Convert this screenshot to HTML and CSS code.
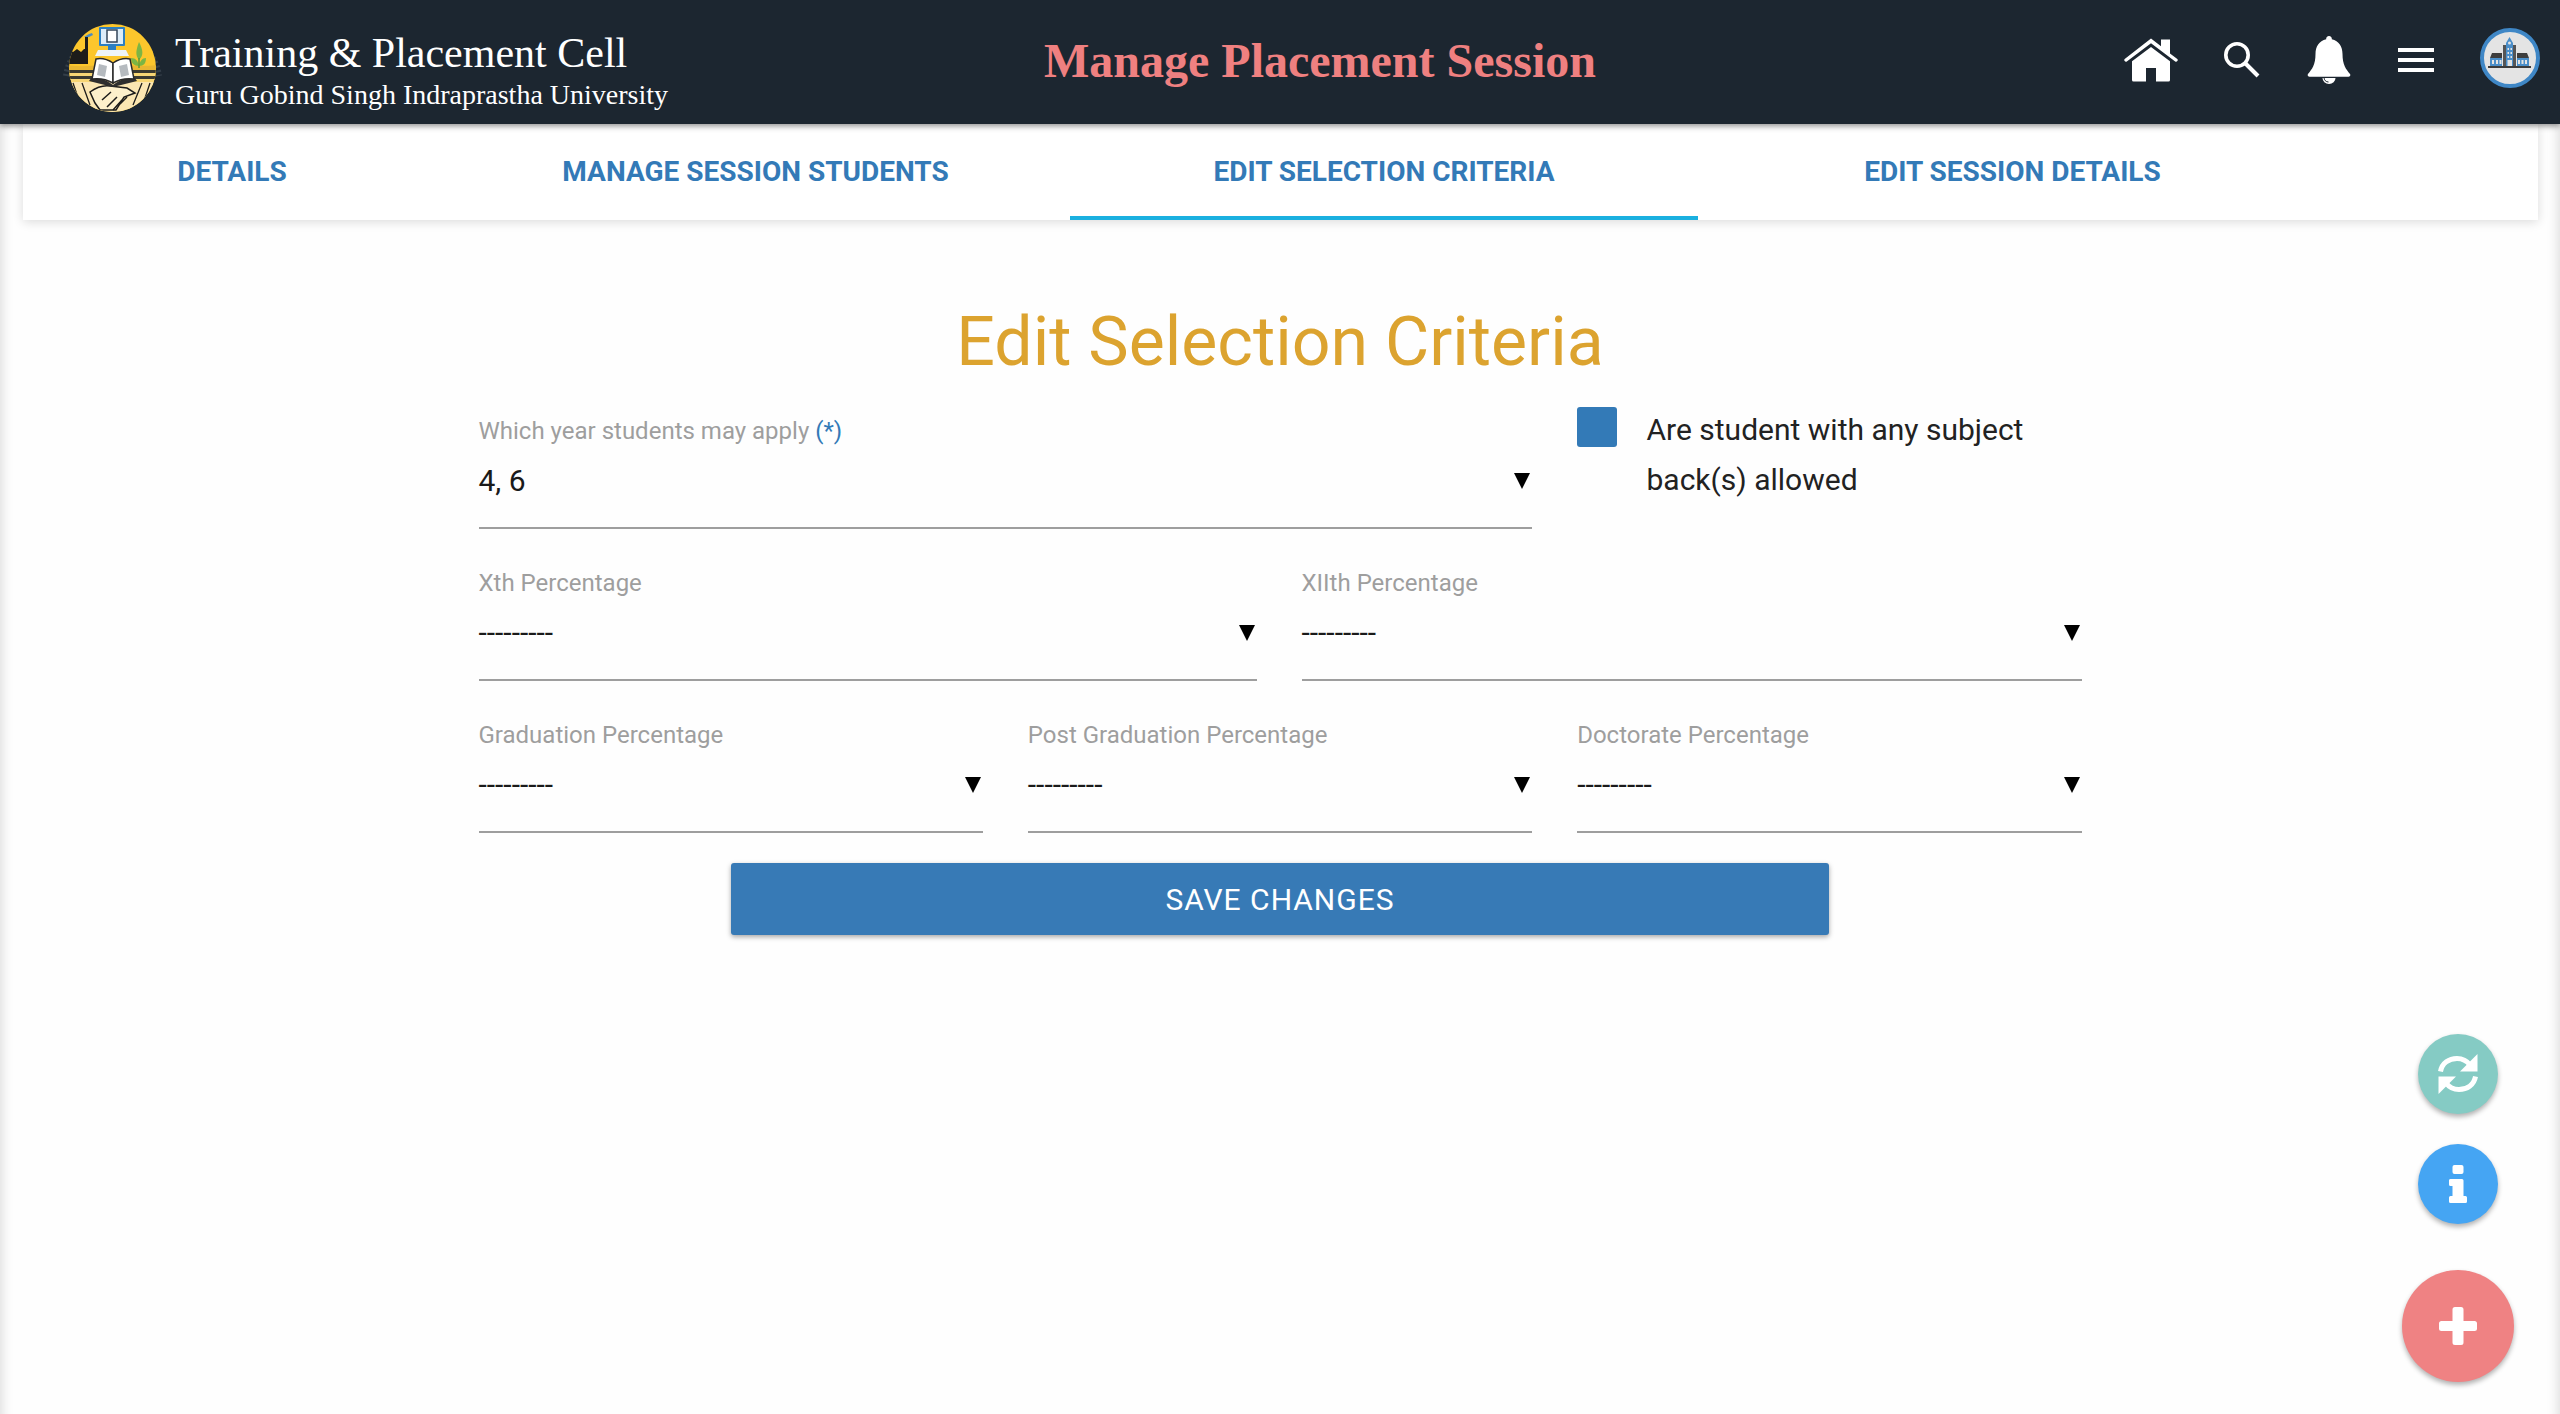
FILE: index.html
```html
<!DOCTYPE html>
<html lang="en">
<head>
    <meta charset="UTF-8">
    <title>Manage Placement Session</title>
    <link rel="stylesheet" href="styles.css">
</head>
<body>
<header class="topbar">
    <div class="brand">
        <svg class="logo" viewBox="0 0 110 100">
            <defs>
                <clipPath id="logoClip"><ellipse cx="52.500" cy="54" rx="43.500" ry="44"/></clipPath>
            </defs>
            <path d="M6 62A47 49 0 0 1 99 62" fill="none" stroke="#333e48" stroke-width="6" stroke-dasharray="2 2.500"/>
            <g clip-path="url(#logoClip)">
                <rect x="0" y="0" width="110" height="100" fill="#fcc62c"/>
                <path d="M0 50c15 3 30 3 40 0v18H0zM66 50c12 3 22 2 44 0v18H66z" fill="#e9b631"/>
                <path d="M0 56h110v3H0zM0 62h110v3H0z" fill="#3b3a30"/>
                <path d="M0 59h110v3H0zM0 65h110v3H0z" fill="#f7d675"/>
                <path d="M4 38l6-2 3 2 4-3 4 3 3-3h4v15H4z" fill="#1d1c1a"/>
                <rect x="25" y="23" width="3" height="17" fill="#1d1c1a"/>
                <path d="M24 23l5-3 3-1 1 2-4 2z" fill="#4b8bc0"/>
                <path d="M79 46c-4-5-3-10 0-18 4 8 5 13 0 18z" fill="#7cb544"/>
                <path d="M79 52c-5 0-8-3-8-8 5 0 7 3 8 8zM79 52c5 0 7-3 7-8-4 0-6 3-7 8z" fill="#7cb544"/>
                <path d="M79 44v10" stroke="#5f9a35" stroke-width="1.500"/>
                <path d="M0 68h110v32H0z" fill="#fbe6b2"/>
                <path d="M13 69l9 26M22 69l8 22M82 69l-9 22M90 69l-8 24" stroke="#1d1c1a" stroke-width="1.300" fill="none"/>
                <path d="M30 78c7-5 13-7 20-6l17 2 8 5-11 4-8 13H40l-5-7z" fill="#fdf0cb" stroke="#1d1c1a" stroke-width="1.500"/>
                <path d="M42 86l9-8M47 93l10-10M53 96l9-10M60 90l7-7" stroke="#1d1c1a" stroke-width="1.500"/>
                <path d="M20 100l12-5 4 5zM84 100l-12-5-4 5z" fill="#1d1c1a"/>
            </g>
            <rect x="39" y="13" width="26" height="19" rx="1" fill="#2c7fc1"/>
            <rect x="41" y="15" width="22" height="15" fill="#dcecf8"/>
            <rect x="47" y="16" width="10" height="12" fill="#fff" stroke="#33465a" stroke-width="1.500"/>
            <path d="M48 32h8v4h-8z" fill="#2c7fc1"/>
            <path d="M38 36h28l3 6H35z" fill="#eef4f8"/>
            <path d="M53 71C45 65 38 63 31 64l-2 3 24 6 24-6-2-3c-7-1-14 1-22 7z" fill="#2e2e2e"/>
            <path d="M53 49c-6-4-12-5-17-4l-4 20c7-1 14 0 21 4z" fill="#fff" stroke="#2a2a2a" stroke-width="1.500"/>
            <path d="M53 49c6-4 12-5 17-4l4 20c-7-1-14 0-21 4z" fill="#fff" stroke="#2a2a2a" stroke-width="1.500"/>
            <path d="M39 50l8 2-2 11-8-2zM59 52l8-2 2 11-8 2z" fill="#46535e" opacity=".4"/>
        </svg>
        <div class="brand-text">
            <div class="brand-title">Training &amp; Placement Cell</div>
            <div class="brand-sub">Guru Gobind Singh Indraprastha University</div>
        </div>
    </div>
    <h1 class="page-name">Manage Placement Session</h1>
    <nav class="top-icons">
        <svg class="ico-home" viewBox="0 0 54 44">
            <path fill="#fff" d="M27 .6 37 8.200V1.500h9V15.500l7.300 5.400a1.700 1.700 0 0 1-2.100 2.600L27 5.300 2.800 23.500A1.700 1.700 0 0 1 .7 20.900z"/>
            <path fill="#fff" d="M27 9 8 23.200V42a1.500 1.500 0 0 0 1.500 1.500H22V30h10v13.500h12.500A1.500 1.500 0 0 0 46 42V23.200z"/>
        </svg>
        <svg class="ico-search" viewBox="0 0 36 36">
            <circle cx="13" cy="13" r="11.200" fill="none" stroke="#fff" stroke-width="3.600"/>
            <path d="M21.500 21.500l12.500 12.500" stroke="#fff" stroke-width="4" fill="none"/>
        </svg>
        <svg class="ico-bell" viewBox="0 0 44 48">
            <path fill="#fff" d="M22 0a2.800 2.800 0 0 1 2.800 3.200C32 5 35.500 10.500 35.500 18c0 11 3.500 15 7.500 20a1.800 1.800 0 0 1-1.500 2.800H2.500A1.800 1.800 0 0 1 1 38c4-5 7.500-9 7.500-20C8.500 10.500 12 5 19.200 3.200A2.800 2.800 0 0 1 22 0z"/>
            <path fill="#fff" d="M15.500 42h13a6.500 6 0 0 1-13 0z"/>
            <path fill="none" stroke="#1c2630" stroke-width="1" d="M17 41.500c0 2.500 2 4.500 4.500 4.500"/>
        </svg>
        <div class="ico-menu"><i></i><i></i><i></i></div>
        <div class="avatar">
            <svg viewBox="4 4 52 52">
                <path d="M8 38h43v2H8z" fill="#3c3c3c"/>
                <path d="M10 30h12v8H10zM37 30h12v8H37z" fill="#4a8ec9"/>
                <path d="M10 30l2-5h10v5zM49 30l-2-5H37v5z" fill="#3d3d3d"/>
                <path d="M23 17h3v21h-3zM33 17h3v21h-3z" fill="#555"/>
                <path d="M26 17h7v21h-7z" fill="#4a8ec9"/>
                <path d="M29.500 9l3.500 6v3h-7v-3z" fill="#4a8ec9"/>
                <circle cx="29.500" cy="15" r="1.500" fill="#e4e4e4"/>
                <path d="M27.500 20h1.500v2h-1.500zM30.500 20h1.500v2h-1.500zM27.500 24h1.500v2h-1.500zM30.500 24h1.500v2h-1.500zM27.500 28h1.500v2h-1.500zM30.500 28h1.500v2h-1.500zM27.500 32h4.500v6h-4.500zM12 32h2v4h-2zM16 32h2v4h-2zM19.500 32h2v4h-2zM38 32h2v4h-2zM41.500 32h2v4h-2zM45 32h2v4h-2z" fill="#e4e4e4"/>
            </svg>
        </div>
    </nav>
</header>

<div class="tabs">
    <a class="tab">DETAILS</a>
    <a class="tab">MANAGE SESSION STUDENTS</a>
    <a class="tab active">EDIT SELECTION CRITERIA</a>
    <a class="tab">EDIT SESSION DETAILS</a>
</div>

<main class="content">
    <h2 class="heading">Edit Selection Criteria</h2>
    <form class="criteria">
        <div class="row row-first">
            <div class="field">
                <label>Which year students may apply <span class="req">(*)</span></label>
                <div class="select"><span>4, 6</span><i class="arrow"></i></div>
            </div>
            <div class="check-field">
                <span class="box"></span>
                <span class="check-text">Are student with any subject back(s) allowed</span>
            </div>
        </div>
        <div class="row row-two">
            <div class="field">
                <label>Xth Percentage</label>
                <div class="select"><span>---------</span><i class="arrow"></i></div>
            </div>
            <div class="field">
                <label>XIIth Percentage</label>
                <div class="select"><span>---------</span><i class="arrow"></i></div>
            </div>
        </div>
        <div class="row row-three">
            <div class="field">
                <label>Graduation Percentage</label>
                <div class="select"><span>---------</span><i class="arrow"></i></div>
            </div>
            <div class="field">
                <label>Post Graduation Percentage</label>
                <div class="select"><span>---------</span><i class="arrow"></i></div>
            </div>
            <div class="field">
                <label>Doctorate Percentage</label>
                <div class="select"><span>---------</span><i class="arrow"></i></div>
            </div>
        </div>
        <button class="save" type="button">SAVE CHANGES</button>
    </form>
</main>

<div class="fabs">
    <div class="fab fab-refresh">
        <svg viewBox="0 0 42 42" width="42" height="42">
            <path fill="none" stroke="#fff" stroke-width="5" d="M3.500 18.500C5 10 12 5.500 20 5.500c5.500 0 10 2.500 13 6.500"/>
            <path fill="#fff" d="M40.500 1v17.500H23z"/>
            <path fill="none" stroke="#fff" stroke-width="5" d="M38.500 23.500C37 32 30 36.500 22 36.500c-5.500 0-10-2.500-13-6.500"/>
            <path fill="#fff" d="M1.500 41V23.500H19z"/>
        </svg>
    </div>
    <div class="fab fab-info">
        <svg viewBox="0 0 18 38" width="18" height="38">
            <rect x="3.500" y="0" width="11" height="9" rx="2" fill="#fff"/>
            <path fill="#fff" d="M2 14h11a1.500 1.500 0 0 1 1.500 1.500V31H16.500a1.500 1.500 0 0 1 1.500 1.500v4A1.500 1.500 0 0 1 16.500 38h-15A1.500 1.500 0 0 1 0 36.500v-4A1.500 1.500 0 0 1 1.500 31h2v-10h-2A1.500 1.500 0 0 1 0 19.500v-4A1.500 1.500 0 0 1 2 14z"/>
        </svg>
    </div>
    <div class="fab fab-add">
        <svg viewBox="0 0 38 38" width="38" height="38">
            <path fill="#fff" d="M16 0h6a2.500 2.500 0 0 1 2.500 2.500V14h11a2.500 2.500 0 0 1 2.500 2.500v5a2.500 2.500 0 0 1-2.500 2.500h-11v11.500A2.500 2.500 0 0 1 22 38h-6a2.500 2.500 0 0 1-2.500-2.500V24h-11A2.500 2.500 0 0 1 0 21.500v-5A2.500 2.500 0 0 1 2.500 14h11V2.500A2.500 2.500 0 0 1 16 0z"/>
        </svg>
    </div>
</div>
</body>
</html>
```

FILE: styles.css
```css
*{
    margin: 0;
    padding: 0;
    box-sizing: border-box;
}
html,body{
    height: 100%;
}
body{
    background: #fefefe;
    box-shadow: inset 14px 0 12px -12px rgba(0,0,0,.14), inset -14px 0 12px -12px rgba(0,0,0,.14);
    font-family: Roboto, "Liberation Sans", sans-serif;
    overflow: hidden;
    position: relative;
}

/* top bar */
.topbar{
    height: 124px;
    background: #1c2630;
    box-shadow: 0 2px 6px rgba(0,0,0,.45);
    display: flex;
    align-items: center;
    position: relative;
    z-index: 2;
}
.brand{
    width: 1044px;
    padding-left: 60px;
    display: flex;
    align-items: center;
    gap: 5px;
}
.logo{
    width: 110px;
    height: 100px;
    flex: none;
    margin-top: 4px;
}
.brand-text{
    font-family: "Liberation Serif", serif;
    color: #fff;
    padding-top: 16px;
}
.brand-title{
    font-size: 42px;
    line-height: 50px;
}
.brand-sub{
    font-size: 28px;
    line-height: 34px;
}
.page-name{
    font-family: "Liberation Serif", serif;
    font-size: 48px;
    font-weight: bold;
    color: #ef8080;
    flex: 1;
    margin-bottom: 4px;
}
.top-icons{
    display: flex;
    align-items: center;
    padding: 0 20px 4px 0;
}
.ico-home{
    width: 54px;
    height: 44px;
    margin-right: 46px;
}
.ico-search{
    width: 36px;
    height: 36px;
    margin-right: 47px;
}
.ico-bell{
    width: 44px;
    height: 48px;
    margin-right: 47px;
}
.ico-menu{
    width: 36px;
    margin-right: 46px;
    display: flex;
    flex-direction: column;
    gap: 6px;
}
.ico-menu i{
    display: block;
    height: 4px;
    background: #fff;
}
.avatar{
    width: 60px;
    height: 60px;
    border-radius: 50%;
    border: 4px solid #3f87c6;
    background: #e4e4e4;
    margin-bottom: 4px;
}
.avatar svg{
    display: block;
    width: 100%;
    height: 100%;
}

/* tabs */
.tabs{
    margin: 0 22px 0 23px;
    height: 96px;
    background: #fff;
    box-shadow: 0 2px 10px rgba(0,0,0,.14);
    display: grid;
    grid-template-columns: 418px 629px 628px 629px;
}
.tab{
    color: #337ab7;
    font-size: 28px;
    font-weight: bold;
    line-height: 88px;
    padding-top: 4px;
    text-align: center;
    border-bottom: 4px solid transparent;
}
.tab.active{
    border-bottom-color: #1ab0e0;
}

/* form */
.content{
    padding-top: 82px;
}
.heading{
    color: #dca32f;
    font-size: 68px;
    font-weight: normal;
    line-height: 80px;
    text-align: center;
    margin-bottom: 33px;
}
.criteria{
    width: 1603px;
    margin: 0 auto;
}
.row{
    display: grid;
    column-gap: 45px;
    margin-bottom: 38px;
}
.row-first{
    grid-template-columns: 1053px 504px;
}
.row-two{
    grid-template-columns: 778px 1fr;
}
.row-three{
    grid-template-columns: 1fr 1fr 1fr;
    margin-bottom: 30px;
}
.field label{
    display: block;
    color: #9e9e9e;
    font-size: 24px;
    line-height: 32px;
}
.req{
    color: #337ab7;
}
.select{
    height: 82px;
    border-bottom: 2px solid #9e9e9e;
    display: flex;
    justify-content: space-between;
    align-items: flex-start;
    padding-top: 14px;
    color: #1a1a1a;
    font-size: 30px;
    line-height: 40px;
}
.arrow{
    width: 0;
    height: 0;
    border-left: 8px solid transparent;
    border-right: 8px solid transparent;
    border-top: 16px solid #000;
    margin: 12px 2px 0 0;
}
.check-field{
    display: flex;
    align-items: flex-start;
    gap: 30px;
}
.box{
    flex: none;
    width: 40px;
    height: 40px;
    margin-top: -8px;
    background: #337ab7;
    border-radius: 3px;
}
.check-text{
    color: #222;
    font-size: 30px;
    line-height: 50px;
    margin-top: -10px;
}
.save{
    display: block;
    width: 1098px;
    height: 72px;
    margin: 0 auto;
    background: #377ab6;
    border: 0;
    border-radius: 3px;
    box-shadow: 0 2px 5px rgba(0,0,0,.35);
    color: #fff;
    font-family: Roboto, "Liberation Sans", sans-serif;
    font-size: 30px;
    letter-spacing: 1px;
}

/* floating buttons */
.fabs{
    position: absolute;
    right: 46px;
    bottom: 32px;
    width: 112px;
    display: flex;
    flex-direction: column;
    align-items: center;
}
.fab{
    border-radius: 50%;
    display: flex;
    align-items: center;
    justify-content: center;
    box-shadow: 0 3px 5px rgba(0,0,0,.3);
}
.fab-refresh{
    width: 80px;
    height: 80px;
    background: #85cbc4;
    margin-bottom: 30px;
}
.fab-info{
    width: 80px;
    height: 80px;
    background: #45a5f3;
    margin-bottom: 46px;
}
.fab-add{
    width: 112px;
    height: 112px;
    background: #ef8283;
}
```
